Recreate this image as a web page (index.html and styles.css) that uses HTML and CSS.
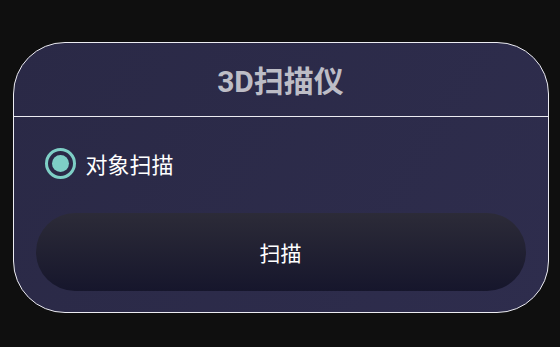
FILE: index.html
```html
<!DOCTYPE html>
<html lang="zh">
<head>
<meta charset="utf-8">
<link rel="stylesheet" href="styles.css">
</head>
<body>
<div class="card">
  <div class="header"><span class="title">3D扫描仪</span></div>
  <div class="body">
    <label class="option">
      <span class="radio"><span class="dot"></span></span>
      <span class="option-text">对象扫描</span>
    </label>
    <div class="btn">扫描</div>
  </div>
</div>
</body>
</html>
```
FILE: styles.css
```css
html, body {
  margin: 0;
  padding: 0;
}
body {
  background: #0f0f0f;
  width: 560px;
  height: 347px;
  padding: 42px 12px 0 12.5px;
  box-sizing: border-box;
  font-family: Roboto, "Noto Sans CJK SC", sans-serif;
}
.card {
  width: 536px;
  height: 271px;
  box-sizing: border-box;
  border: 1.5px solid #ececf2;
  border-radius: 52px;
  background: linear-gradient(120deg, #2a2946 0%, #2e2d4d 100%);
  display: flex;
  flex-direction: column;
  overflow: hidden;
}
.header {
  height: 73px;
  border-bottom: 1.5px solid #ececf2;
  display: flex;
  align-items: center;
  justify-content: center;
  flex-shrink: 0;
}
.title {
  font-size: 30px;
  font-weight: 700;
  color: #bdbdc6;
  margin-top: -2px;
}
.body {
  flex: 1;
  display: flex;
  flex-direction: column;
  padding: 29px 22px 21px 22px;
}
.option {
  display: flex;
  align-items: center;
  padding-left: 9px;
  height: 34px;
}
.radio {
  width: 31px;
  height: 31px;
  box-sizing: border-box;
  border: 3px solid #7ecfc6;
  border-radius: 50%;
  display: flex;
  align-items: center;
  justify-content: center;
}
.dot {
  width: 17px;
  height: 17px;
  border-radius: 50%;
  background: #7ecfc6;
}
.option-text {
  margin-left: 10px;
  font-size: 22px;
  color: #ffffff;
  font-family: "Noto Sans CJK SC", sans-serif;
}
.btn {
  margin-top: auto;
  height: 78px;
  border-radius: 39px;
  background: linear-gradient(180deg, #2c2b38 0%, #16162c 100%);
  display: flex;
  align-items: center;
  justify-content: center;
  color: #ffffff;
  font-size: 21px;
  font-family: "Noto Sans CJK SC", sans-serif;
}
```
